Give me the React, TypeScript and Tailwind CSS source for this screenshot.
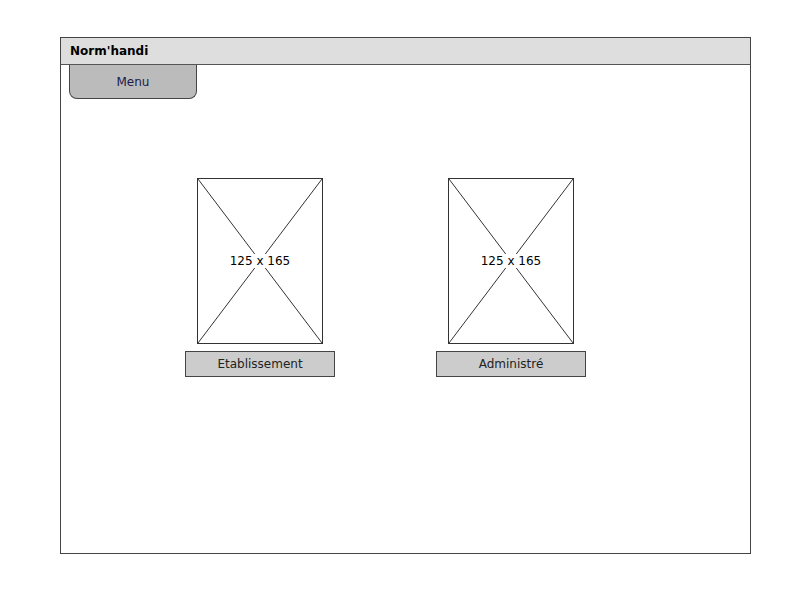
import React from "react";

function Placeholder() {
  return (
    <div className="relative w-[126px] h-[166px] border border-[#333] bg-white">
      <svg className="absolute inset-0" width="124" height="164" viewBox="0 0 124 164">
        <line x1="0" y1="0" x2="124" y2="164" stroke="#333" strokeWidth="1" />
        <line x1="124" y1="0" x2="0" y2="164" stroke="#333" strokeWidth="1" />
      </svg>
      <div className="absolute inset-0 flex items-center justify-center">
        <span className="bg-white px-[1px] text-[12px] leading-[14px] text-black">125 x 165</span>
      </div>
    </div>
  );
}

function Tile({ label }: { label: string }) {
  return (
    <div className="flex flex-col items-center w-[150px]">
      <Placeholder />
      <div className="mt-[7px] w-[150px] h-[26px] border border-[#444] bg-[#cccccc] flex items-center justify-center text-[12px] text-[#222]">
        {label}
      </div>
    </div>
  );
}

export default function App() {
  return (
    <div
      className="w-[800px] h-[600px] bg-white pt-[37px] pl-[60px]"
      style={{ fontFamily: '"DejaVu Sans", "Liberation Sans", sans-serif' }}
    >
      <div className="w-[691px] h-[517px] border border-[#444] flex flex-col">
        <div className="h-[27px] bg-[#dedede] border-b border-[#555] flex items-center pl-[9px] text-[12px] font-bold text-black">
          Norm'handi
        </div>
        <div className="pl-[8px]">
          <div className="w-[128px] h-[34px] bg-[#bbbbbb] border border-t-0 border-[#444] rounded-b-[8px] flex items-center justify-center text-[12px] text-[#1a1a4a]">
            Menu
          </div>
        </div>
        <div className="flex gap-[101px] pl-[124px] pt-[79px]">
          <Tile label="Etablissement" />
          <Tile label="Administré" />
        </div>
      </div>
    </div>
  );
}
